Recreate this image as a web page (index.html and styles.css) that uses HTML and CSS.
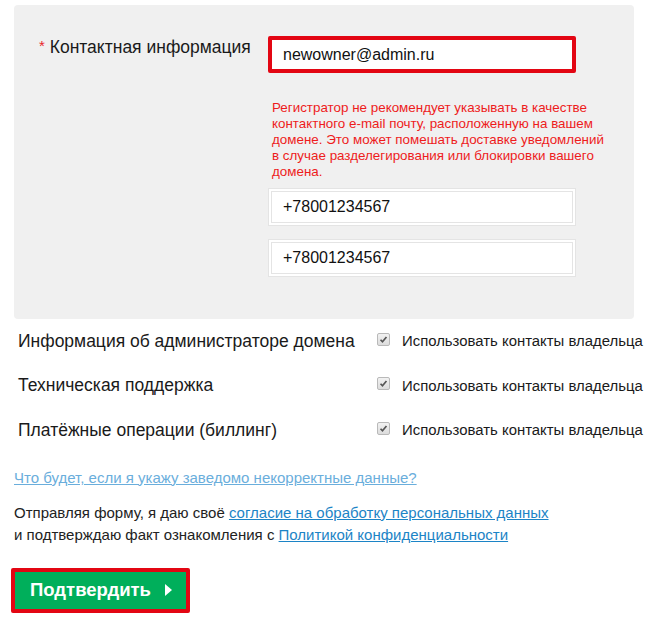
FILE: index.html
```html
<!DOCTYPE html>
<html lang="ru">
<head>
<meta charset="utf-8">
<title>Контактная информация</title>
<link rel="stylesheet" href="styles.css">
</head>
<body>
<div class="panel">
  <div class="row">
    <div class="label"><span class="req">*</span> Контактная информация</div>
    <div class="fields">
      <div class="field field-error">newowner@admin.ru</div>
      <p class="warning">Регистратор не рекомендует указывать в качестве контактного e-mail почту, расположенную на вашем домене. Это может помешать доставке уведомлений в случае разделегирования или блокировки вашего домена.</p>
      <div class="field field-plain"><div class="field-inner">+78001234567</div></div>
      <div class="field field-plain"><div class="field-inner">+78001234567</div></div>
    </div>
  </div>
</div>
<div class="contacts">
  <div class="contact-row">
    <div class="contact-name">Информация об администраторе домена</div>
    <label class="check"><span class="box"><svg viewBox="0 0 13 13" width="13" height="13"><path d="M3 6.8 L5.3 9.2 L10 3.6" fill="none" stroke="#555" stroke-width="2"/></svg></span>Использовать контакты владельца</label>
  </div>
  <div class="contact-row">
    <div class="contact-name">Техническая поддержка</div>
    <label class="check"><span class="box"><svg viewBox="0 0 13 13" width="13" height="13"><path d="M3 6.8 L5.3 9.2 L10 3.6" fill="none" stroke="#555" stroke-width="2"/></svg></span>Использовать контакты владельца</label>
  </div>
  <div class="contact-row">
    <div class="contact-name">Платёжные операции (биллинг)</div>
    <label class="check"><span class="box"><svg viewBox="0 0 13 13" width="13" height="13"><path d="M3 6.8 L5.3 9.2 L10 3.6" fill="none" stroke="#555" stroke-width="2"/></svg></span>Использовать контакты владельца</label>
  </div>
</div>
<p class="help"><a href="#" class="help-link">Что будет, если я укажу заведомо некорректные данные?</a></p>
<p class="consent">Отправляя форму, я даю своё <a href="#">согласие на обработку персональных данных</a><br>и подтверждаю факт ознакомления с <a href="#">Политикой конфиденциальности</a></p>
<div class="submit-wrap">
  <button class="submit">Подтвердить <span class="arrow"></span></button>
</div>
</body>
</html>
```

FILE: styles.css
```css
html, body {
  margin: 0;
  padding: 0;
  background: #fff;
}
body {
  font-family: "Liberation Sans", Arial, sans-serif;
  color: #1a1a1a;
  width: 652px;
  height: 619px;
  overflow: hidden;
}
.panel {
  margin: 5px 0 0 14px;
  width: 620px;
  height: 314px;
  box-sizing: border-box;
  background: #f0f0f0;
  border-radius: 4px;
  padding: 31px 0 0 0;
}
.row {
  display: flex;
}
.label {
  width: 228px;
  padding-left: 25px;
  padding-top: 0;
  font-size: 17.5px;
  line-height: 20px;
  color: #1a1a1a;
  white-space: nowrap;
}
.req {
  color: #e8262b;
  font-size: 15px;
  vertical-align: 2px;
}
.fields {
  width: 308px;
  margin-left: 1px;
}
.field {
  box-sizing: border-box;
  width: 308px;
  background: #fff;
  font-size: 16px;
  color: #111;
}
.field-error {
  height: 37px;
  border: 4px solid #e30613;
  border-radius: 2px;
  padding: 0 0 0 11px;
  line-height: 29px;
}
.warning {
  margin: 27px 0 0 4px;
  width: 340px;
  font-size: 13.4px;
  line-height: 16px;
  color: #ee1c1c;
}
.field-plain {
  height: 38px;
  border: 1px solid #e4e4e4;
  padding: 2px;
}
.field-inner {
  height: 32px;
  border: 1px solid #e4e4e4;
  box-sizing: border-box;
  padding-left: 11px;
  line-height: 30px;
}
.warning + .field-plain {
  margin-top: 8px;
}
.field-plain + .field-plain {
  margin-top: 13px;
}
.contacts {
  margin: 0 0 0 18px;
}
.contact-row {
  display: flex;
  align-items: center;
  height: 44.5px;
}
.contact-name {
  width: 359px;
  font-size: 17.5px;
  color: #1a1a1a;
  white-space: nowrap;
}
.check {
  display: flex;
  align-items: center;
  font-size: 14.9px;
  color: #1a1a1a;
  white-space: nowrap;
}
.box {
  width: 11px;
  height: 11px;
  border: 1px solid #b9b9b9;
  border-radius: 2px;
  background: linear-gradient(#f2f2f2, #dcdcdc);
  margin-right: 12px;
  display: flex;
  align-items: center;
  justify-content: center;
  margin-top: -4px;
}
.box svg {
  width: 11px;
  height: 11px;
}
.help {
  margin: 15px 0 0 14px;
  font-size: 15px;
  line-height: 20px;
}
.help-link {
  color: #6aaedc;
}
.consent {
  margin: 14px 0 0 14px;
  font-size: 15px;
  line-height: 22px;
  color: #222;
}
.consent a {
  color: #1c84c6;
}
.submit-wrap {
  margin: 22px 0 0 11px;
}
.submit {
  box-sizing: border-box;
  width: 179px;
  height: 45px;
  border: 4px solid #e30613;
  border-radius: 2px;
  background: #00af5b;
  color: #fff;
  font-family: "Liberation Sans", Arial, sans-serif;
  font-weight: bold;
  font-size: 18.5px;
  padding: 0 0 0 15px;
  text-align: left;
  display: flex;
  align-items: center;
  cursor: pointer;
}
.arrow {
  display: inline-block;
  width: 0;
  height: 0;
  border-top: 6px solid transparent;
  border-bottom: 6px solid transparent;
  border-left: 7px solid #fff;
  margin-left: 14px;
}
```
